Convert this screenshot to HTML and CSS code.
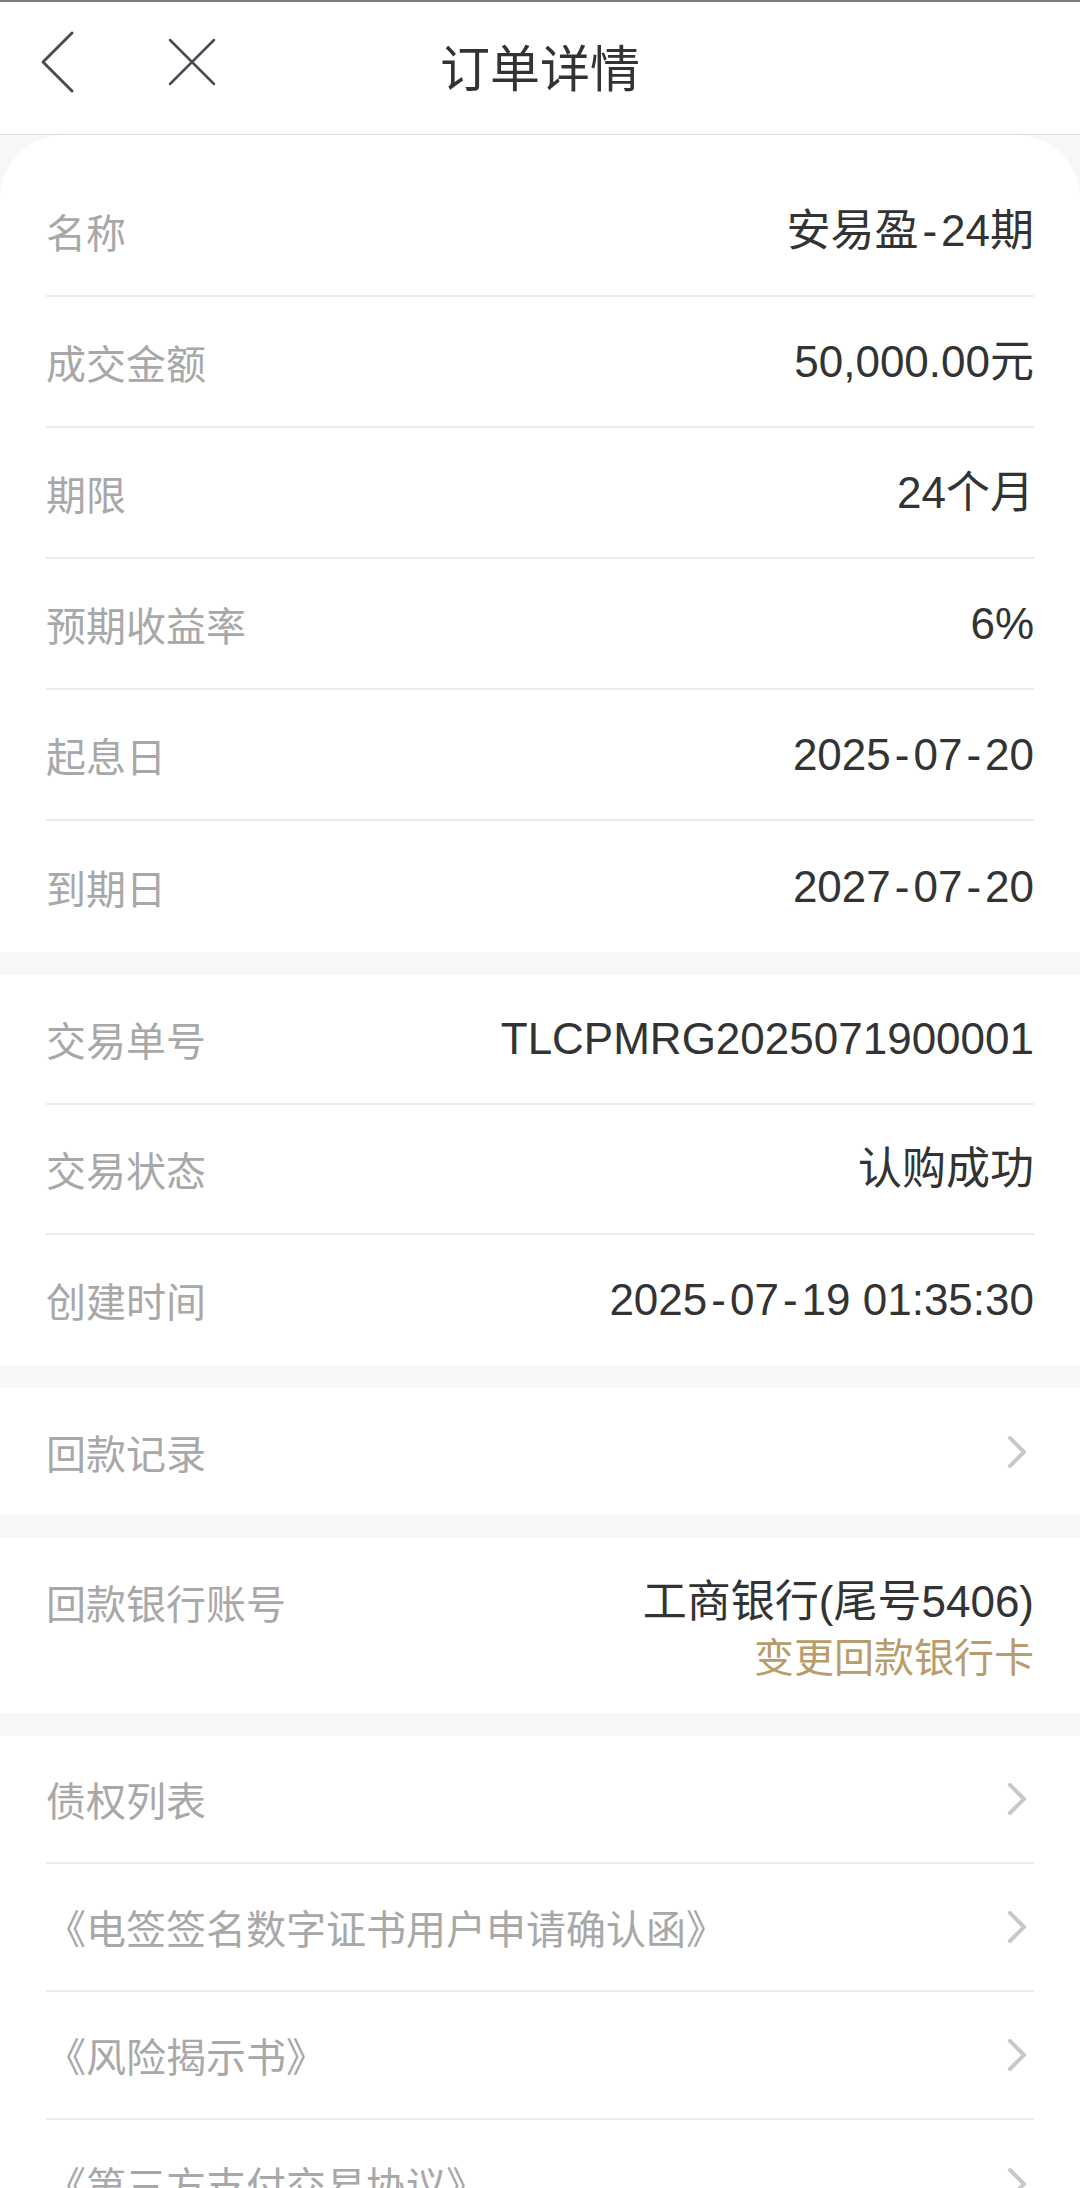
FILE: index.html
```html
<!DOCTYPE html>
<html>
<head>
    <meta charset="utf-8">
    <title>订单详情</title>
    <meta name="viewport" content="width=device-width, initial-scale=1.0">
    <link rel="stylesheet" href="styles.css">
</head>
<body>
    <header class="nav">
        <div class="nav-left">
            <button class="nav-btn back-btn" aria-label="返回">
                <svg width="40" height="64" viewBox="0 0 40 64" fill="none" stroke="currentColor" stroke-width="3" stroke-linecap="round" stroke-linejoin="round">
                    <polyline points="33,3 4,32 33,61"/>
                </svg>
            </button>
            <button class="nav-btn close-btn" aria-label="关闭">
                <svg width="48" height="48" viewBox="0 0 48 48" fill="none" stroke="currentColor" stroke-width="2.5" stroke-linecap="round">
                    <path d="M2 2L46 46M46 2L2 46"/>
                </svg>
            </button>
        </div>
        <h1 class="nav-title">订单详情</h1>
        <div class="nav-right"></div>
    </header>

    <section class="panel panel-first">
        <div class="row info-row"><span class="label">名称</span><span class="value">安易盈<span class="dash">-</span>24期</span></div>
        <div class="row info-row"><span class="label">成交金额</span><span class="value">50,000.00元</span></div>
        <div class="row info-row"><span class="label">期限</span><span class="value">24个月</span></div>
        <div class="row info-row"><span class="label">预期收益率</span><span class="value">6%</span></div>
        <div class="row info-row"><span class="label">起息日</span><span class="value">2025<span class="dash">-</span>07<span class="dash">-</span>20</span></div>
        <div class="row info-row"><span class="label">到期日</span><span class="value">2027<span class="dash">-</span>07<span class="dash">-</span>20</span></div>
    </section>

    <section class="panel">
        <div class="row info-row"><span class="label">交易单号</span><span class="value">TLCPMRG2025071900001</span></div>
        <div class="row info-row"><span class="label">交易状态</span><span class="value">认购成功</span></div>
        <div class="row info-row"><span class="label">创建时间</span><span class="value">2025<span class="dash">-</span>07<span class="dash">-</span>19 01:35:30</span></div>
    </section>

    <section class="panel">
        <a class="row link-row single">
            <span class="label">回款记录</span>
            <svg class="arrow" width="22" height="34" viewBox="0 0 22 34" fill="none" stroke="currentColor" stroke-width="4" stroke-linecap="round" stroke-linejoin="round"><polyline points="4,3 18,17 4,31"/></svg>
        </a>
    </section>

    <section class="panel">
        <div class="row bank-row">
            <span class="label">回款银行账号</span>
            <div class="bank-info">
                <span class="value">工商银行(尾号5406)</span>
                <a class="change-link">变更回款银行卡</a>
            </div>
        </div>
    </section>

    <section class="panel">
        <a class="row link-row">
            <span class="label">债权列表</span>
            <svg class="arrow" width="22" height="34" viewBox="0 0 22 34" fill="none" stroke="currentColor" stroke-width="4" stroke-linecap="round" stroke-linejoin="round"><polyline points="4,3 18,17 4,31"/></svg>
        </a>
        <a class="row link-row">
            <span class="label">《电签签名数字证书用户申请确认函》</span>
            <svg class="arrow" width="22" height="34" viewBox="0 0 22 34" fill="none" stroke="currentColor" stroke-width="4" stroke-linecap="round" stroke-linejoin="round"><polyline points="4,3 18,17 4,31"/></svg>
        </a>
        <a class="row link-row">
            <span class="label">《风险揭示书》</span>
            <svg class="arrow" width="22" height="34" viewBox="0 0 22 34" fill="none" stroke="currentColor" stroke-width="4" stroke-linecap="round" stroke-linejoin="round"><polyline points="4,3 18,17 4,31"/></svg>
        </a>
        <a class="row link-row">
            <span class="label">《第三方支付交易协议》</span>
            <svg class="arrow" width="22" height="34" viewBox="0 0 22 34" fill="none" stroke="currentColor" stroke-width="4" stroke-linecap="round" stroke-linejoin="round"><polyline points="4,3 18,17 4,31"/></svg>
        </a>
    </section>
</body>
</html>
```

FILE: styles.css
```css
:root {
    --bg-color: #f7f7f7;
    --card-bg: #ffffff;
    --title-color: #333333;
    --icon-color: #4a4a55;
    --label-color: #a8a8a8;
    --value-color: #333333;
    --line-color: #ececec;
    --arrow-color: #c8c8c8;
    --gold-color: #b99c6b;
}

body {
    margin: 0;
    background-color: var(--bg-color);
    font-family: 'Liberation Sans', 'Noto Sans CJK SC', sans-serif;
    color: var(--value-color);
}

.nav {
    display: grid;
    grid-template-columns: 1fr auto 1fr;
    align-items: center;
    box-sizing: border-box;
    height: 135px;
    padding-bottom: 6px;
    background-color: var(--card-bg);
    border-top: 2px solid #7d7d7d;
    border-bottom: 1px solid #dcdcdc;
}

.nav-left {
    display: flex;
    align-items: center;
    padding-left: 39px;
}

.nav-btn {
    display: flex;
    padding: 0;
    border: none;
    background: none;
    color: var(--icon-color);
}

.back-btn svg {
    margin-bottom: 6px;
}

.close-btn {
    margin-left: 89px;
}

.close-btn svg {
    margin-bottom: 6px;
}

.nav-title {
    margin: 0;
    font-size: 50px;
    font-weight: 400;
    line-height: 60px;
    color: var(--title-color);
    font-family: 'Noto Sans CJK SC', sans-serif;
}

.panel {
    background-color: var(--card-bg);
    margin-top: 23px;
}

.panel-first {
    margin-top: 0;
    padding-top: 31px;
    border-radius: 64px 64px 0 0;
}

.row {
    display: flex;
    justify-content: space-between;
    align-items: center;
    box-sizing: border-box;
    margin: 0 46px;
    border-bottom: 2px solid var(--line-color);
    text-decoration: none;
}

.row:last-child {
    border-bottom: none;
}

.info-row {
    height: 130px;
}

.panel-first .info-row {
    height: 131px;
}

.link-row {
    height: 128px;
}

.link-row.single {
    height: 127px;
}

.label {
    font-size: 40px;
    line-height: 52px;
    color: var(--label-color);
    font-family: 'Noto Sans CJK SC', sans-serif;
}

.value {
    font-size: 44px;
    line-height: 52px;
    color: var(--value-color);
    white-space: nowrap;
}

.dash {
    margin: 0 4px;
}

.arrow {
    color: var(--arrow-color);
    margin-right: 6px;
}

.bank-row {
    align-items: flex-start;
    padding: 38px 0 32px;
}

.bank-info {
    display: flex;
    flex-direction: column;
    align-items: flex-end;
}

.change-link {
    margin-top: 1px;
    font-size: 40px;
    line-height: 52px;
    color: var(--gold-color);
    font-family: 'Noto Sans CJK SC', sans-serif;
}
```
